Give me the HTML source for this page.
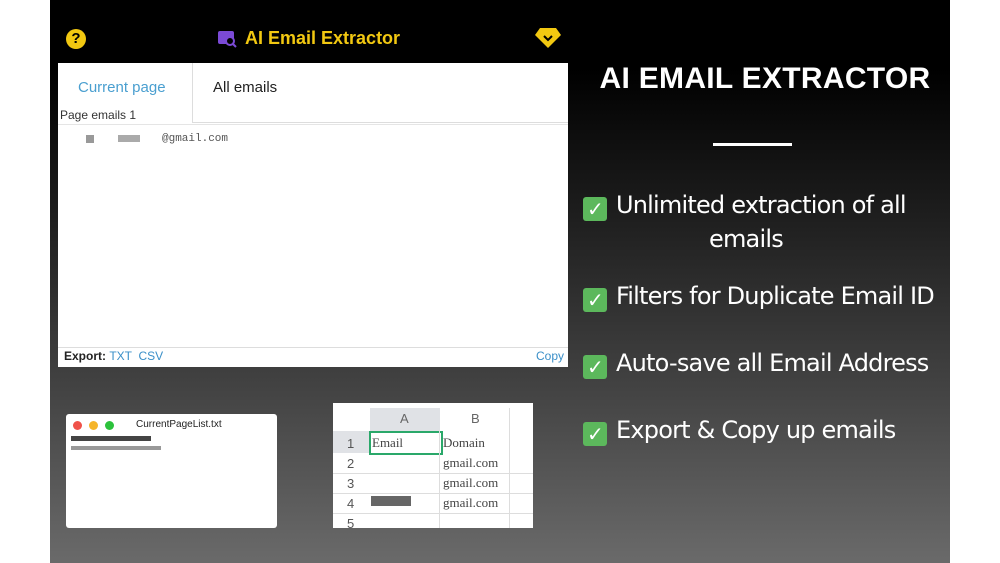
<!DOCTYPE html><html><head><style>
body{margin:0;width:1000px;height:563px;background:#fff;position:relative;overflow:hidden;font-family:"Liberation Sans",sans-serif}
.bg{position:absolute;left:50px;top:0;width:900px;height:563px;background:linear-gradient(#000 0%,#000 12%,#1a1a1a 35%,#444 70%,#6a6a6a 100%)}
.a{position:absolute}
.ck{display:inline-block;width:24px;height:24px;background:#5cb85c;border-radius:3px;color:#fff;font-size:20px;line-height:24px;text-align:center;vertical-align:-3px;margin-right:9px;font-weight:bold}
.f{color:#fff;font-size:24px;font-family:"DejaVu Sans","Liberation Sans",sans-serif;letter-spacing:-0.8px}
</style></head><body>
<div class="bg"></div>
<div class="a" style="left:66px;top:29px;width:20px;height:20px;border-radius:50%;background:#f2c811;color:#000;font-weight:bold;font-size:15px;text-align:center;line-height:20px">?</div>
<svg class="a" style="left:217px;top:28px" width="20" height="20"><rect x="1" y="3" width="16" height="13" rx="2" fill="#7b4ad6"/><circle cx="13" cy="13" r="4" fill="#000" stroke="#7b4ad6" stroke-width="2"/><path d="M16 16l3 3" stroke="#7b4ad6" stroke-width="2"/></svg>
<div class="a" style="left:245px;top:28px;color:#f2c811;font-weight:bold;font-size:18px">AI Email Extractor</div>
<svg class="a" style="left:534px;top:26px" width="28" height="24"><path d="M6 2h16l5 7-13 13L1 9z" fill="#f2c811"/><path d="M10 10l4 4 4-4" stroke="#000" stroke-width="2" fill="none"/></svg>
<div class="a" style="left:58px;top:63px;width:510px;height:304px;background:#fff">
 <div class="a" style="left:0;top:59px;width:510px;height:1px;background:#ddd"></div>
 <div class="a" style="left:0;top:0;width:134px;height:60px;background:#fff;border-right:1px solid #ddd"></div>
 <div class="a" style="left:20px;top:16px;color:#4a9fd0;font-size:15px">Current page</div>
 <div class="a" style="left:155px;top:16px;color:#222;font-size:15px">All emails</div>
 <div class="a" style="left:2px;top:45px;color:#333;font-size:12px">Page emails 1</div>
 <div class="a" style="left:0;top:61px;width:510px;height:1px;background:#e5e5e5"></div>
 <div class="a" style="left:28px;top:72px;width:8px;height:8px;background:#999"></div>
 <div class="a" style="left:60px;top:72px;width:22px;height:7px;background:#aaa"></div>
 <div class="a" style="left:104px;top:70px;color:#555;font-size:11px;font-family:'Liberation Mono',monospace">@gmail.com</div>
 <div class="a" style="left:0;top:284px;width:510px;height:1px;background:#ddd"></div>
 <div class="a" style="left:6px;top:286px;font-size:12px;font-weight:bold;color:#222">Export: <span style="color:#3a8fc8;font-weight:normal">TXT &nbsp;CSV</span></div>
 <div class="a" style="right:4px;top:286px;font-size:12px;color:#3a8fc8">Copy</div>
</div>
<div class="a" style="left:66px;top:414px;width:211px;height:114px;background:#fff;border-radius:3px">
 <div class="a" style="left:7px;top:7px;width:9px;height:9px;border-radius:50%;background:#f0524a"></div>
 <div class="a" style="left:23px;top:7px;width:9px;height:9px;border-radius:50%;background:#f5b52a"></div>
 <div class="a" style="left:39px;top:7px;width:9px;height:9px;border-radius:50%;background:#2cc23c"></div>
 <div class="a" style="left:70px;top:5px;font-size:10px;color:#222">CurrentPageList.txt</div>
 <div class="a" style="left:5px;top:22px;width:80px;height:5px;background:#444"></div>
 <div class="a" style="left:5px;top:32px;width:90px;height:4px;background:#999"></div>
</div>
<div class="a" style="left:333px;top:403px;width:200px;height:125px;background:#fff;overflow:hidden;font-family:'Liberation Serif',serif;font-size:13px;color:#444">
 <div class="a" style="left:37px;top:5px;width:70px;height:23px;background:#e0e2e6"></div>
 <div class="a" style="left:0;top:28px;width:37px;height:22px;background:#e0e2e6"></div>
 <div class="a" style="left:67px;top:8px;font-family:'Liberation Sans';color:#666">A</div>
 <div class="a" style="left:138px;top:8px;font-family:'Liberation Sans';color:#666">B</div>
 <div class="a" style="left:14px;top:31px;font-family:'Liberation Sans';line-height:20px;color:#555">1<br>2<br>3<br>4<br>5</div>
 <div class="a" style="left:36px;top:28px;width:70px;height:20px;border:2px solid #2aa86a"></div>
 <div class="a" style="left:39px;top:30px;line-height:20px">Email</div>
 <div class="a" style="left:110px;top:30px;line-height:20px">Domain<br>gmail.com<br>gmail.com<br>gmail.com</div>
 <div class="a" style="left:0;top:70px;width:200px;height:1px;background:#ddd"></div>
 <div class="a" style="left:0;top:90px;width:200px;height:1px;background:#ddd"></div>
 <div class="a" style="left:0;top:110px;width:200px;height:1px;background:#ddd"></div>
 <div class="a" style="left:106px;top:28px;width:1px;height:100px;background:#ddd"></div>
 <div class="a" style="left:176px;top:5px;width:1px;height:120px;background:#ddd"></div>
 <div class="a" style="left:38px;top:93px;width:40px;height:10px;background:#666"></div>
</div>
<div class="a" style="left:580px;top:62px;width:370px;text-align:center;color:#fff;font-size:30px;font-weight:bold;letter-spacing:0.3px">AI EMAIL EXTRACTOR</div>
<div class="a" style="left:713px;top:143px;width:79px;height:3px;background:#fff"></div>
<div class="a f" style="left:583px;top:191px"><span class="ck">✓</span>Unlimited extraction of all</div>
<div class="a f" style="left:709px;top:225px">emails</div>
<div class="a f" style="left:583px;top:282px"><span class="ck">✓</span>Filters for Duplicate Email ID</div>
<div class="a f" style="left:583px;top:349px"><span class="ck">✓</span>Auto-save all Email Address</div>
<div class="a f" style="left:583px;top:416px"><span class="ck">✓</span>Export &amp; Copy up emails</div>
</body></html>
